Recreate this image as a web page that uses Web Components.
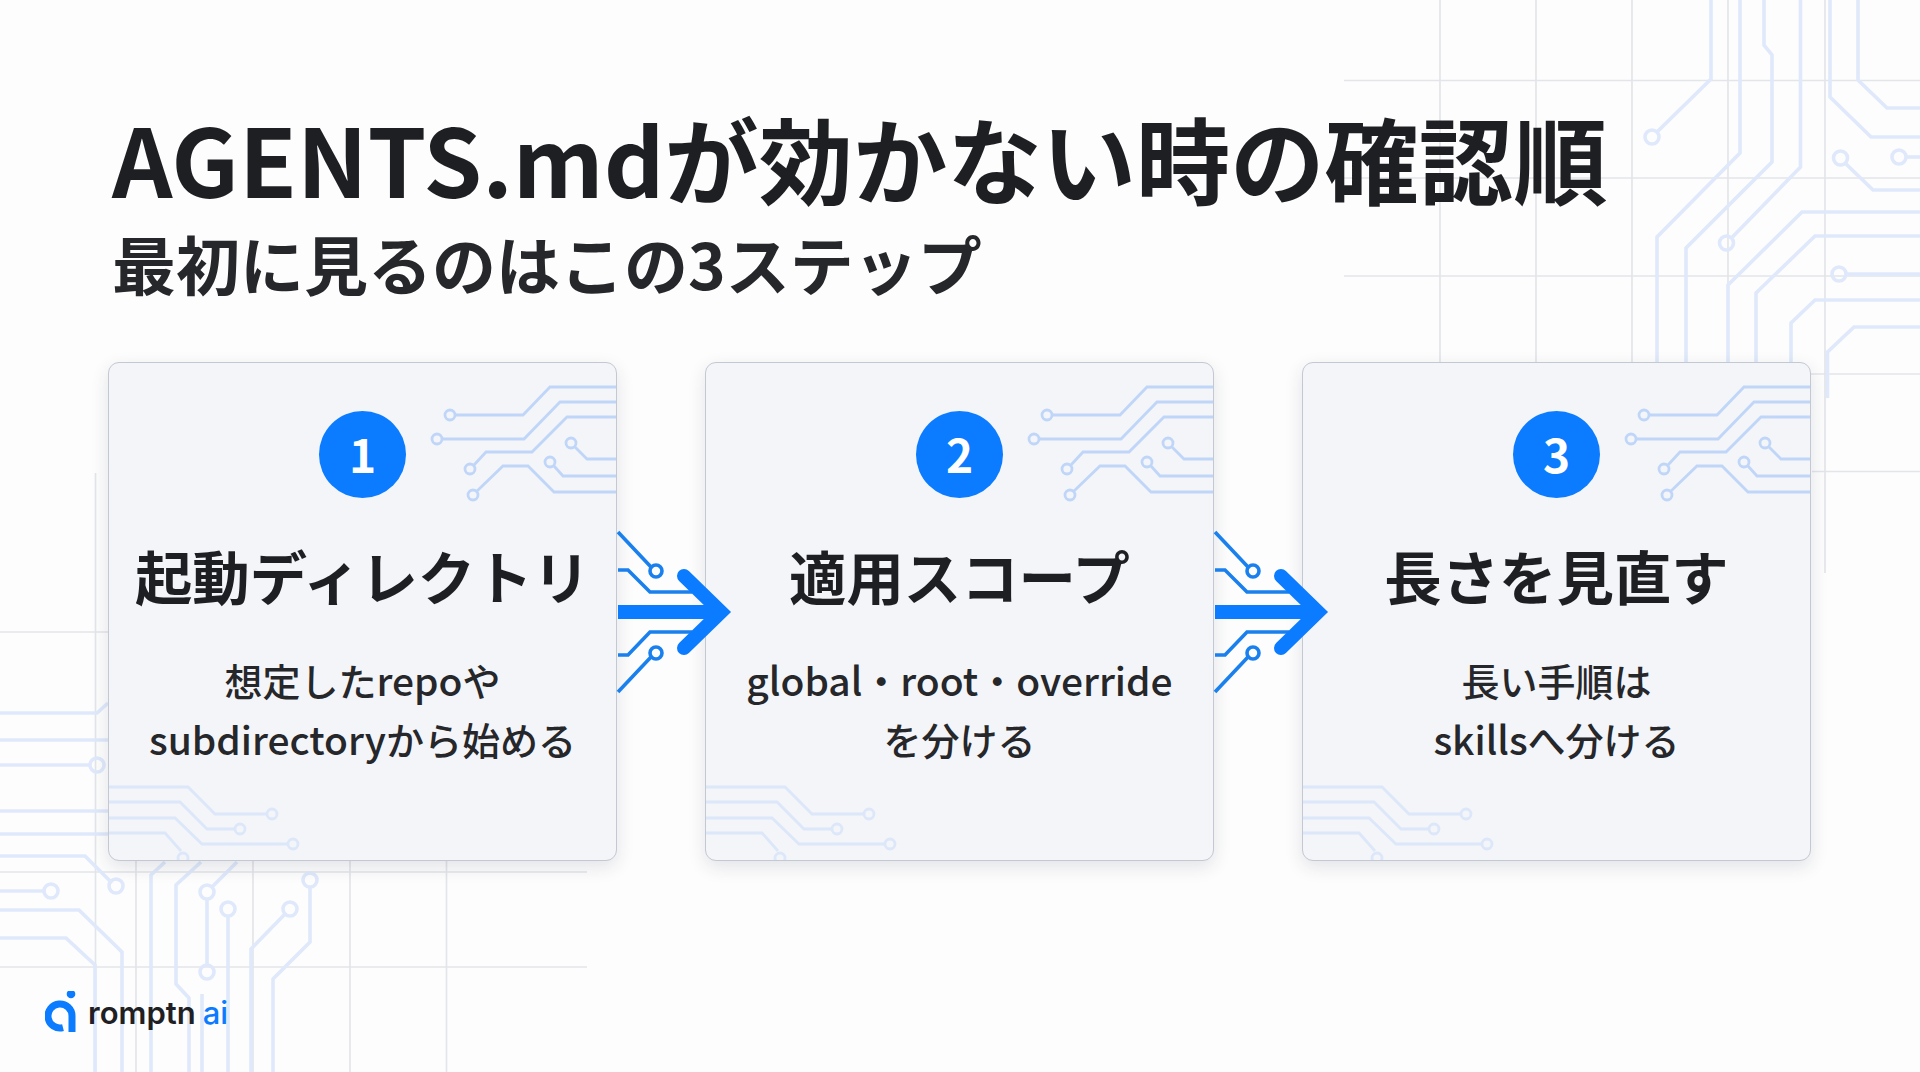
<!DOCTYPE html>
<html lang="ja">
<head>
<meta charset="utf-8">
<title>AGENTS.mdが効かない時の確認順</title>
<style>
html,body{margin:0;padding:0;background:#fdfdfd}
body{font-family:"Noto Sans CJK JP","Noto Sans",sans-serif;color:#1e1f23}
.l{font-size:1.025em}
</style>
</head>
<body>
<template id="t-slide">
<style>
:host{display:block;position:relative;width:1920px;height:1072px;overflow:hidden;background:#fdfdfd}
.content{position:relative;display:flex;flex-direction:column;height:100%}
</style>
<circuit-bg></circuit-bg>
<div class="content"><slot></slot></div>
</template>

<template id="t-bg">
<style>
:host{display:block;position:absolute;inset:0}
svg{display:block;width:1920px;height:1072px}
.g path{fill:none;stroke:#e3e5e9;stroke-width:1.7}
.c *{fill:none;stroke:#dfe9fb;stroke-width:3.6}
</style>
<svg viewBox="0 0 1920 1072" aria-hidden="true">
<g class="g">
<path d="M1344 80.5H1920M1344 178H1920M1344 276H1920M1344 374H1920M1812 471.5H1920"/>
<path d="M1440 0V362M1536 0V362M1632 0V362M1728 0V362M1825 0V573"/>
<path d="M0 632H108M0 872H587M0 967H587"/>
<path d="M95.5 473V1072M136 860V1072M253 860V1072M350 860V1072M446.5 860V1072"/>
</g>
<g class="c">
<circle cx="1652" cy="137" r="7"/><path d="M1657 132L1711 79V0"/>
<path d="M1740 0V153L1657 237V362"/>
<path d="M1764 0V45L1772 55V162L1686 248V362"/>
<circle cx="1726.5" cy="243" r="7"/><path d="M1731.5 238L1800.5 167V0"/>
<path d="M1728 362V285L1802 212H1920"/>
<path d="M1756 362V293L1815 236H1920"/>
<path d="M1830 0V97L1871 137H1920"/>
<path d="M1858 0V80L1887 108H1920"/>
<circle cx="1840.5" cy="158" r="7"/><path d="M1845 163L1873 190H1920"/>
<circle cx="1899" cy="157" r="7"/><path d="M1906 157H1920"/>
<circle cx="1839" cy="274" r="7"/><path d="M1846 274H1920"/>
<path d="M1791 362V323L1815 300H1920"/>
<path d="M1827.5 398V352L1854 327H1920"/>

<path d="M0 713H97L108 703"/><path d="M0 740H108"/>
<circle cx="97" cy="765" r="7"/><path d="M0 765H90"/>
<path d="M0 811H108M0 834H108"/>
<path d="M0 856H85L112 883"/><circle cx="116" cy="886" r="7"/>
<circle cx="51" cy="891" r="7"/><path d="M0 891H44"/>
<path d="M0 910H79L122 952V1072"/>
<path d="M0 938H66L95 965V1072"/>
<path d="M151 1072V875L165 862"/>
<path d="M201 862L176 885V984L189 998V1072"/>
<path d="M202 994V1072"/>
<circle cx="207" cy="892" r="7"/><path d="M212 887L237 862M207 899V965"/><circle cx="207" cy="972" r="7"/>
<circle cx="228" cy="909" r="7"/><path d="M228 916V1072"/>
<circle cx="290" cy="909" r="7"/><path d="M285 914L251 949V1072"/>
<circle cx="310" cy="880" r="7"/><path d="M310 887V942L273 979V1072"/>
</g>
</svg>
</template>

<template id="t-header">
<style>
:host{display:block;padding:96px 0 0 112px;height:276px;box-sizing:border-box;font-weight:700;color:#1e1f23}
h1{margin:0;font-size:94.3px;line-height:122px;font-weight:700;white-space:nowrap}
h2{margin:0;font-size:64px;line-height:88px;font-weight:700;white-space:nowrap;color:#26272b}
</style>
<h1><slot name="title"></slot></h1>
<h2><slot name="sub"></slot></h2>
</template>

<template id="t-card">
<style>
:host{display:flex;flex-direction:column;align-items:center;position:relative;width:509px;height:499px;box-sizing:border-box;
 padding-top:48px;background:#f4f5f8;border:1.6px solid #c3c8d3;border-radius:11px;box-shadow:0 6px 18px rgba(35,45,75,.12);overflow:hidden;text-align:center}
svg{position:absolute;left:-.6px;top:-.6px;width:509px;height:499px}
.a *{fill:none;stroke:#c0d6f8;stroke-width:2.8}
.b *{fill:none;stroke:#dce7fa;stroke-width:2.8}
.num{position:relative;width:87px;height:87px;box-sizing:border-box;padding-bottom:4px;border-radius:50%;background:#0b7cff;color:#fff;font-size:46px;font-weight:700;display:flex;align-items:center;justify-content:center;line-height:1}
.ttl{position:relative;margin-top:37px;font-size:57.4px;line-height:80px;font-weight:700;color:#1e1f23;white-space:nowrap}
.txt{position:relative;margin-top:35px;font-size:38px;line-height:59px;font-weight:500;color:#26272b;white-space:nowrap}
</style>
<svg viewBox="108 362 509 499" aria-hidden="true">
<g class="a">
<circle cx="450" cy="415" r="5"/><path d="M455 415H523L550 387H620"/>
<circle cx="437" cy="439" r="5"/><path d="M442 439H524L560 402H620"/>
<circle cx="470" cy="469" r="5"/><path d="M474 465L486 452H532L567 417H620"/>
<circle cx="473" cy="495" r="5"/><path d="M477 491L503 466H528L554 492H620"/>
<circle cx="571" cy="443" r="5"/><path d="M575 447L587 459H620"/>
<circle cx="550" cy="462" r="5"/><path d="M554 466L563 476H620"/>
</g>
<g class="b">
<path d="M108 787H188L215 814H267"/><circle cx="272" cy="814" r="5"/>
<path d="M108 802H180L207 829H235"/><circle cx="240" cy="829" r="5"/>
<path d="M108 818H175L202 844H288"/><circle cx="293" cy="844" r="5"/>
<path d="M108 833H165L181 851"/><circle cx="183" cy="858" r="5"/>
</g>
</svg>
<div class="num" id="n"></div>
<div class="ttl"><slot name="title"></slot></div>
<div class="txt"><slot name="text"></slot></div>
</template>

<template id="t-arrow">
<style>
:host{display:block;position:relative;z-index:1;width:88px;height:200px;align-self:center}
svg{display:block;width:88px;height:200px;overflow:visible}
.l *{fill:none;stroke:#1a80ee;stroke-width:3.6}
</style>
<svg viewBox="617 512 88 200" aria-hidden="true">
<g class="l">
<path d="M618 532L651 567"/><circle cx="656" cy="571" r="6"/>
<path d="M618 570H628L650 592H692"/>
<path d="M618 692L651 657"/><circle cx="656" cy="653" r="6"/>
<path d="M618 655H628L650 632H692"/>
</g>
<path d="M618 612H720" fill="none" stroke="#0b7cff" stroke-width="14"/>
<path d="M684 576L721 612L684 648" fill="none" stroke="#0b7cff" stroke-width="14" stroke-linecap="round" stroke-linejoin="miter"/>
</svg>
</template>

<template id="t-logo">
<style>
:host{display:flex;align-items:center;gap:11px;height:50px;font-family:Inter,"Noto Sans",sans-serif;font-size:31px;font-weight:600;color:#1f2023;line-height:1}
svg{display:block;width:32px;height:42px;flex:none}
.b{color:#0b7cff;margin-left:7px;font-weight:500}
</style>
<svg viewBox="45 990 32 42" aria-hidden="true">
<path d="M63 1026.6A12 12 0 1 1 72 1015V1031" fill="none" stroke="#0b7cff" stroke-width="7"/>
<circle cx="71" cy="993" r="4.3" fill="#0b7cff"/>
</svg>
<span><slot></slot><span class="b"><slot name="ai"></slot></span></span>
</template>

<template id="t-steps">
<style>:host{display:flex;padding:86px 0 0 108px}</style>
<slot></slot>
</template>

<template id="t-footer">
<style>:host{display:block;margin-top:auto;padding:0 0 35px 45px}</style>
<slot></slot>
</template>

<slide-page>
  <slide-header>
    <span slot="title">AGENTS.mdが効かない時の確認順</span>
    <span slot="sub">最初に見るのはこの3ステップ</span>
  </slide-header>
  <step-row>
    <step-card num="1"><span slot="title">起動ディレクトリ</span><span slot="text">想定した<span class="l">repo</span>や<br><span class="l">subdirectory</span>から始める</span></step-card>
    <step-arrow></step-arrow>
    <step-card num="2"><span slot="title">適用スコープ</span><span slot="text"><span class="l">global</span>・<span class="l">root</span>・<span class="l">override</span><br>を分ける</span></step-card>
    <step-arrow></step-arrow>
    <step-card num="3"><span slot="title">長さを見直す</span><span slot="text">長い手順は<br><span class="l">skills</span>へ分ける</span></step-card>
  </step-row>
  <slide-footer><brand-logo>romptn<span slot="ai">ai</span></brand-logo></slide-footer>
</slide-page>

<script>
function def(name, tpl, init){
  customElements.define(name, class extends HTMLElement{
    constructor(){
      super();
      const r=this.attachShadow({mode:'open'});
      r.appendChild(document.getElementById(tpl).content.cloneNode(true));
    }
    connectedCallback(){ if(init) init(this); }
  });
}
def('circuit-bg','t-bg');
def('slide-page','t-slide');
def('slide-header','t-header');
def('step-row','t-steps');
def('slide-footer','t-footer');
def('brand-logo','t-logo');
def('step-arrow','t-arrow');
def('step-card','t-card',el=>{el.shadowRoot.getElementById('n').textContent=el.getAttribute('num');});
</script>
</body>
</html>
